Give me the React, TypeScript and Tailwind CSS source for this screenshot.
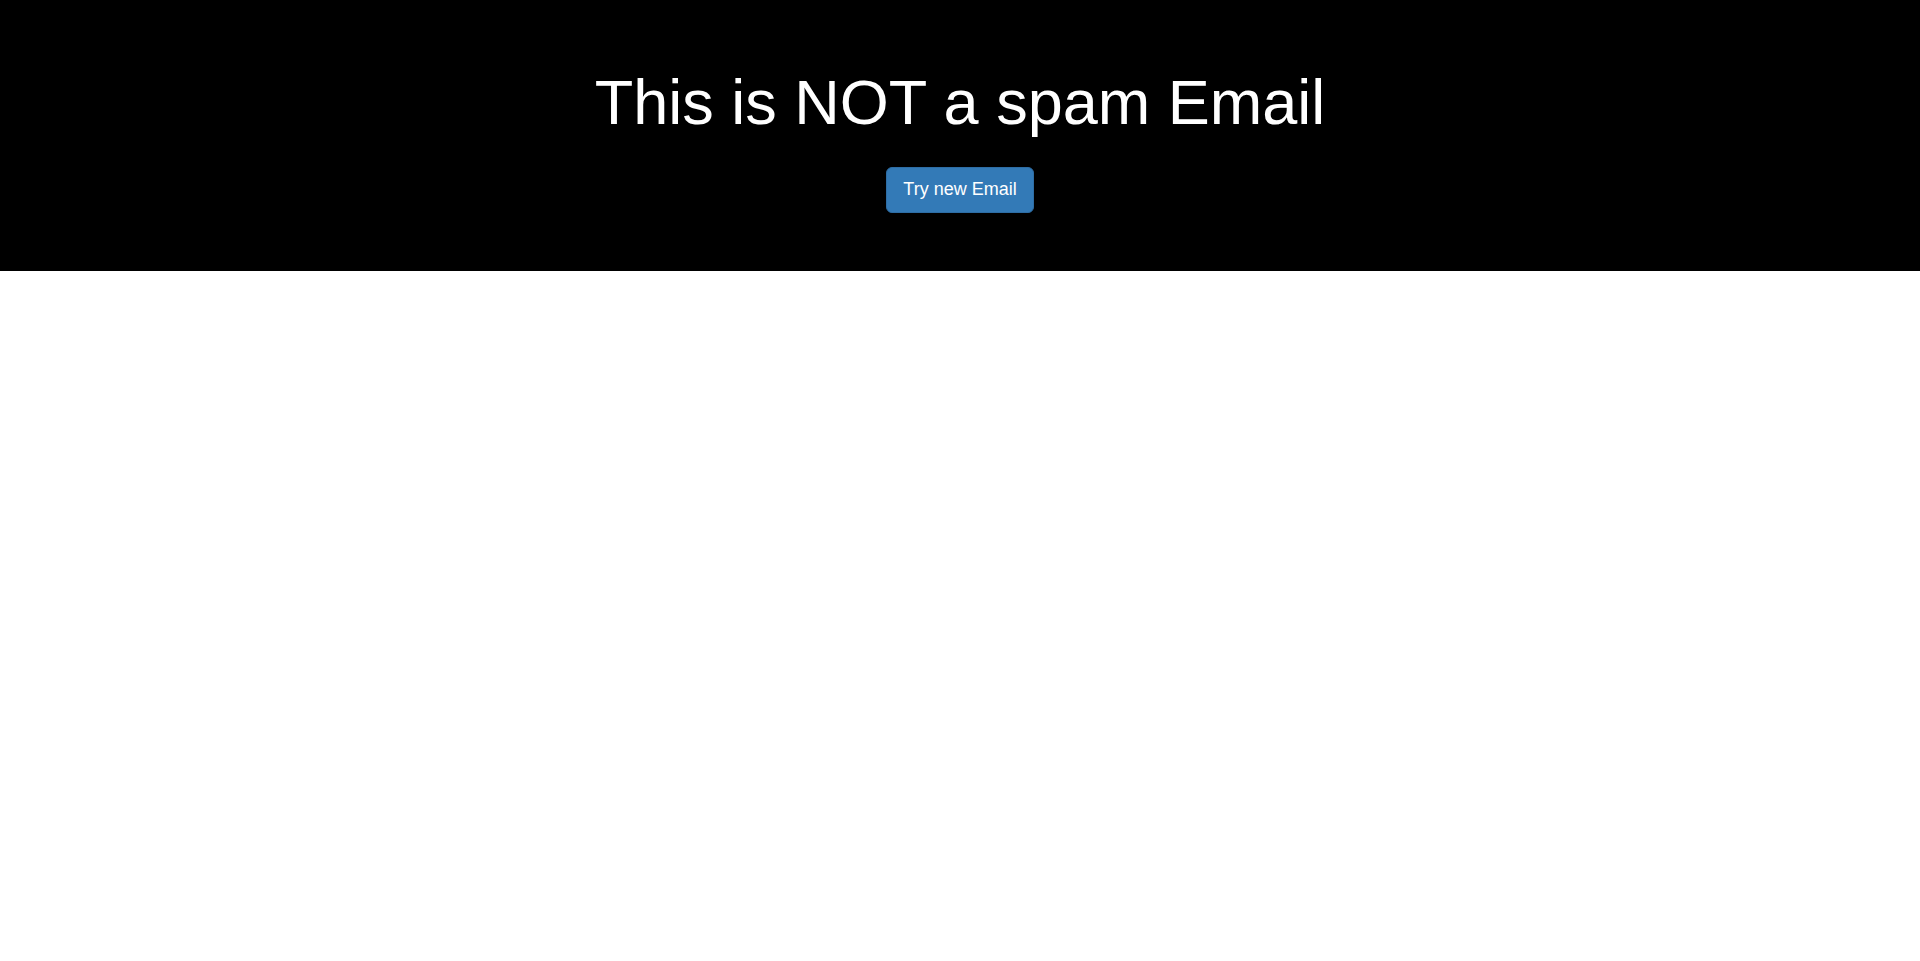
const App = () => {
    return (
        <div className="min-h-screen bg-white font-['Liberation_Sans',Arial,sans-serif]">
            <div className="bg-black pt-[68px] pb-[58px] text-center">
                <h1 className="text-[63px] leading-[1.1] text-white font-normal">This is NOT a spam Email</h1>
                <button
                    className="mt-[30px] h-[46px] px-4 text-[18px] leading-[1.3333] text-white bg-[#337ab7] border border-[#2e6da4] rounded-[6px]"
                >
                    Try new Email
                </button>
            </div>
        </div>
    );
};

export default App;
